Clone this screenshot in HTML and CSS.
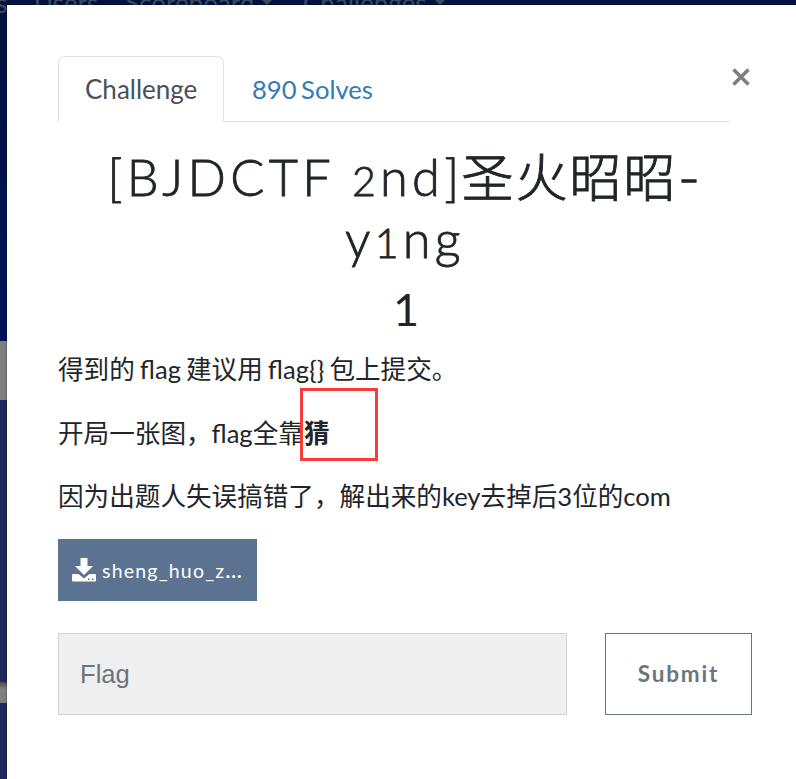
FILE: index.html
```
<!DOCTYPE html>
<html lang="zh-CN">
<head>
<meta charset="utf-8">
<title>Challenge</title>
<link rel="stylesheet" href="styles.css">
</head>
<body>
<div class="navbar" aria-hidden="true"><span class="nav-cut">s</span><span class="nav-users">Users</span><span class="nav-score">Scoreboard</span><i class="caret"></i><span class="nav-chal">Challenges</span><i class="caret"></i></div>
<main class="modal">
  <header class="modal-head">
    <nav class="tabs"><a class="tab active">Challenge</a><a class="tab solves">890 Solves</a></nav>
    <button class="close" aria-label="Close"><svg width="18" height="18" viewBox="0 0 18 18"><path d="M1.500 1.500l15 15M16.500 1.500l-15 15"/></svg></button>
  </header>
  <h2 class="title">[BJDCTF <span class="two">2</span>nd]<span class="han">圣火昭昭</span><span class="dash">-</span><br>y<span class="two">1</span>ng</h2>
  <h3 class="value">1</h3>
  <div class="desc">
    <p class="spaced">得到的 flag 建议用 flag{} 包上提交。</p>
    <p>开局一张图，flag全靠<span class="mark"><strong>猜</strong></span></p>
    <p>因为出题人失误搞错了，解出来的key去掉后3位的com</p>
  </div>
  <a class="file"><svg width="24" height="24" viewBox="0 0 24 24"><path d="M8.500 0h7v8h5.500l-9 9-9-9h5.500z"/><path fill-rule="evenodd" d="M1 16h5.500l5.500 4.500 5.500-4.500H23q1 0 1 1v5.500q0 1-1 1H1q-1 0-1-1V17q0-1 1-1zM16 20.500v1.500h1.500v-1.500zM20 20.500v1.500h1.500v-1.500z"/></svg><span class="fname">sheng_huo_z<b>...</b></span></a>
  <form class="submit-row">
    <input class="flag" type="text" placeholder="Flag">
    <button class="submit" type="button">Submit</button>
  </form>
</main>
</body>
</html>
```
FILE: styles.css
```
*, *::after { box-sizing: border-box; }
html, body { height: 100%; }
body {
  margin: 0;
  overflow: hidden;
  color: #212529;
  font: 25.600px/39px Lato, "Noto Sans CJK SC", sans-serif;
  background: linear-gradient(#001240 0, #001240 60px, #00145a 341px, #808080 341px, #808080 400px, #1f285b 400px, #1f285b 682px, #484848 682px, #808080 689px, #808080 703px, #1f285b 703px);
}
.navbar {
  height: 5px;
  display: flex;
  align-items: flex-end;
  font-size: 26px;
  color: #41495e;
  background: #001240;
}
.navbar span { display: block; height: 22px; line-height: 28px; transform: translateY(6px); white-space: nowrap; }
.nav-cut { width: 38px; margin-left: -4px; }
.nav-users { width: 91px; }
.nav-score { width: 129px; }
.nav-chal { width: 124px; margin-left: 29px; }
.caret { border: 7px solid transparent; border-top-color: #41495e; border-bottom: 0; margin-left: 6px; }
.modal {
  position: relative;
  margin-left: 7px;
  height: 774px;
  padding: 51px 44px 0 51px;
  background: #fff;
  box-shadow: 0 0 2px #0008;
}
.modal-head { display: flex; height: 66px; }
.tabs { display: flex; width: 672px; border-bottom: 1px solid #dee2e6; }
.tab { height: 66px; padding: 13px 27px; border: 1px solid transparent; color: #337ab7; white-space: nowrap; }
.tab.active { width: 166px; padding-left: 26px; font-size: 26px; color: #495057; background: #fff; border-color: #dee2e6 #dee2e6 #fff; border-radius: 7px 7px 0 0; }
.solves { word-spacing: -2px; }
.close { margin: 12px 0 0 2px; padding: 0; width: 18px; height: 18px; border: 0; background: none; line-height: 0; }
.close svg { fill: none; stroke: #7f7f7f; stroke-width: 3.600; }
.title {
  margin: 24px 0 0;
  width: 694px;
  height: 124px;
  text-align: center;
  font-weight: 300;
  font-size: 50.500px;
  line-height: 62px;
  letter-spacing: 4.300px;
  white-space: nowrap;
  -webkit-text-stroke: .8px #212529;
}
.two { font-size: 41px; line-height: 0; }
.han { margin-left: -2px; font-size: 52px; line-height: 0; letter-spacing: 2px; vertical-align: -1px; -webkit-text-stroke: .9px #212529; }
.dash { display: inline-block; margin-left: 2px; line-height: 0; transform: scaleX(1.150); -webkit-text-stroke: 1.500px #212529; }
.value { margin: 12px 0 0; padding-left: 2px; width: 694px; text-align: center; font-weight: 400; font-size: 45px; line-height: 55px; }
.desc { margin-top: 11px; padding-top: 2px; height: 191px; white-space: nowrap; }
.desc p { margin: 0 0 24.500px; height: 39px; }
.spaced { word-spacing: -1.500px; }
.mark { position: relative; }
.mark::after { content: ""; position: absolute; left: -4px; top: calc(50% - 45px); width: 78px; height: 73px; border: 3px solid #f83b3b; }
.file { display: flex; align-items: center; width: 199px; height: 62px; padding: 0 14px; color: #fff; background: #5b7290; font-size: 19.500px; letter-spacing: 1.200px; white-space: nowrap; }
.file svg { fill: #fff; margin-right: 6px; flex: none; }
.fname { padding-top: 1px; }
.submit-row { display: flex; justify-content: space-between; width: 694px; margin-top: 32px; }
.flag { width: 509px; height: 82px; padding: 1px 21px 0; border: 1px solid #ced4da; border-radius: 0; background: #efefef; font: 25.600px "Liberation Sans", sans-serif; }
.flag::placeholder { color: #6c757d; opacity: 1; }
.submit { width: 147px; height: 82px; padding: 0 0 1px; border: 1px solid #6c757d; background: #fff; color: #6c757d; font: 700 22.500px Lato, sans-serif; letter-spacing: 1.800px; }
```
